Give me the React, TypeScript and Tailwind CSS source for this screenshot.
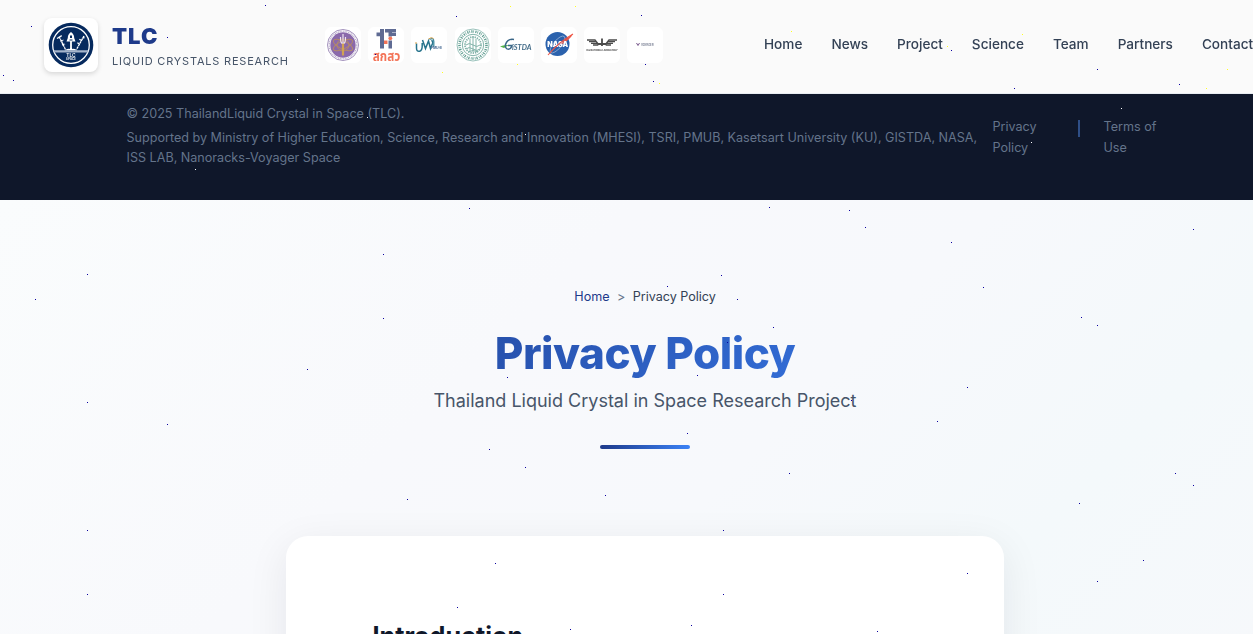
import React from "react";

type Dot = [number, number];

const blueDots: Dot[] = [
  [87, 274], [35, 299], [383, 254], [383, 318], [307, 369], [87, 402], [167, 424], [407, 499], [87, 530], [87, 594],
  [849, 210], [865, 227], [951, 242], [1193, 229], [983, 287], [1081, 317], [1097, 325], [967, 387], [937, 421],
  [851, 400], [1175, 473], [1193, 485], [1079, 503], [1143, 560], [1097, 581], [967, 573], [877, 631], [721, 275],
  [667, 286], [737, 299], [773, 327], [507, 377], [697, 375], [727, 342], [687, 433], [489, 449], [525, 467],
  [789, 473], [605, 495], [723, 530], [469, 208], [769, 207], [495, 563], [457, 607], [570, 629], [691, 625],
  [723, 594], [265, 5], [31, 26], [3, 75], [13, 80], [167, 37], [456, 16], [641, 15], [645, 64], [375, 54],
  [653, 81], [951, 50], [1097, 69], [1179, 84], [1014, 88],
];
const yellowDots: Dot[] = [
  [1022, 34], [1206, 88], [947, 46], [510, 6], [575, 6], [517, 64], [442, 72], [659, 83], [791, 31], [1227, 69],
];
const whiteDots: Dot[] = [[1121, 108], [1031, 142], [297, 99], [367, 117], [525, 134], [195, 169]];

function Stars() {
  return (
    <svg className="pointer-events-none absolute left-0 top-0 z-50" width="1253" height="634" shapeRendering="crispEdges">
      {blueDots.map(([x, y]) => <rect key={`${x}-${y}`} x={x} y={y} width="1" height="1" fill="#0a00a0" />)}
      {yellowDots.map(([x, y]) => <rect key={`${x}-${y}`} x={x} y={y} width="1" height="1" fill="#ffff20" />)}
      {whiteDots.map(([x, y]) => <rect key={`${x}-${y}`} x={x} y={y} width="1" height="1" fill="#ffffff" />)}
    </svg>
  );
}

function TlcLogo() {
  return (
    <svg width="46" height="46" viewBox="0 0 46 46">
      <circle cx="23" cy="23" r="22.3" fill="#062a5e" />
      <circle cx="23" cy="23" r="18.3" fill="#062a5e" stroke="#fff" strokeWidth="1.3" />
      <path d="M23 10c-2.700 1.800-3.200 4-3.200 6l-1.300 3.500h9l-1.300-3.500c0-2-.5-4.200-3.200-6z" fill="#fff" />
      <path d="M22 13.500h2v2.500h-2zM21.500 17.500h3v1h-3z" fill="#062a5e" />
      <path d="M23 19v9" stroke="#fff" strokeWidth="1.800" />
      <path d="M11 14.500l6.500 13M9 16.500l5-3M12.500 19.500l3-1.500M14 23l3-1M36 14l-7.500 13.500M33.500 18.500l-2.500-1.500M31.500 22l-2.500-1.500M34.500 16l2-.5" stroke="#fff" strokeWidth="1.300" fill="none" strokeDasharray="2.500 .5" />
      <path d="M16.500 28.500q3-2.500 5-1.500l1.500-1.500 1.500 1.500q2-1 5 1.500z" fill="#fff" />
      <path d="M5.500 28.300h35l-.8 2.200H6.300z" fill="#a5b4cb" />
      <text x="23" y="34.800" textAnchor="middle" fontSize="4.800" fontWeight="600" fill="#fff" fontFamily="Inter, sans-serif">TLC</text>
      <text x="23" y="38.400" textAnchor="middle" fontSize="3.200" fontWeight="600" fill="#fff" fontFamily="Inter, sans-serif">SPACE</text>
    </svg>
  );
}

function MinistryLogo() {
  return (
    <svg width="32" height="32" viewBox="0 0 32 32">
      <circle cx="16" cy="16" r="15.500" fill="#fff" stroke="#a493bd" strokeWidth="1" />
      <circle cx="16" cy="16" r="13.800" fill="none" stroke="#b9abcb" strokeWidth="1.200" strokeDasharray="1 .7" />
      <circle cx="16" cy="16" r="12.700" fill="#8a69ab" />
      <g fill="none" stroke="#b58a68" strokeWidth=".9">
        <ellipse cx="16" cy="16" rx="10.500" ry="4" transform="rotate(25 16 16)" />
        <ellipse cx="16" cy="16" rx="10.500" ry="4" transform="rotate(-25 16 16)" />
        <circle cx="16" cy="16" r="6" />
      </g>
      <path d="M16 5v10M13.500 8c0 5 .5 6 2.500 7 2-1 2.500-2 2.500-7" stroke="#eee5ef" strokeWidth="1.200" fill="none" />
      <path d="M16 14.500v12" stroke="#d1a253" strokeWidth="2.200" />
    </svg>
  );
}

function TsriLogo() {
  return (
    <svg width="32" height="36" viewBox="0 0 32 36" overflow="visible">
      <path d="M10 2h4v19.500h-4zM6.500 5.500H14v3.700H6.500zM15 2h11v3.500H15zM18.500 5H22v4.500h-3.500zM22 6h4v3h-4zM18.500 13.500H22v8h-3.500z" fill="#5f6b93" />
      <circle cx="20.300" cy="11.300" r="1.900" fill="#f37458" />
      <path d="M14 13.500h3.500V17H14z" fill="#f37458" />
      <text x="16.500" y="34" textAnchor="middle" fontSize="14" fontWeight="700" textLength="27.500" lengthAdjust="spacingAndGlyphs" fill="#f37458" fontFamily="Noto Sans, Noto Sans Thai, sans-serif">สกสว</text>
    </svg>
  );
}

function PmuLogo() {
  return (
    <svg width="32" height="32" viewBox="0 0 32 32" fill="none">
      <path d="M3.500 14.500V19q0 4 3.200 3.200Q9.200 21.500 9.200 17v-3M9.500 11l3 8.500 3-7.500 2 7.500 2-5q.8-2.500-1.200-3" stroke="#26738c" strokeWidth="1.500" />
      <path d="M16.500 10.500q4.300-2.500 4.300 2V18" stroke="#3d8ba0" strokeWidth="1.300" />
      <path d="M2 14h2M15.500 10q3-2.500 5-.5" stroke="#d9a34d" strokeWidth="1" />
      <text x="18" y="20" fontSize="3.600" fontWeight="700" fill="#53749b" fontFamily="Inter, sans-serif" textLength="11">PMU-B</text>
    </svg>
  );
}

function KuLogo() {
  return (
    <svg width="34" height="34" viewBox="0 0 34 34" fill="none" stroke="#82b3a9">
      <circle cx="17" cy="17" r="16" strokeWidth=".8" />
      <circle cx="17" cy="17" r="13.500" stroke="#5d9c8f" strokeWidth="2.600" strokeDasharray="1.200 .9 .7 1.300" />
      <circle cx="17" cy="17" r="10.700" strokeWidth="1" />
      <circle cx="17" cy="17" r="8" strokeWidth="1.800" strokeDasharray="1.300 1" />
      <path d="M17 8v16M14 11v12M20 11v12M10 17q3-3 7 0t7 0M10 21q3-3 7 0t7 0M12 24q5-3 10 0" strokeWidth="1" />
    </svg>
  );
}

function GistdaLogo() {
  return (
    <svg width="34" height="20" viewBox="0 0 34 20" overflow="visible">
      <path d="M1 11.500q5-2.500 9.500-1-3 0-5.500 2.500z" fill="#55b54b" />
      <path d="M15 4.500Q8.500 3.500 6.500 9.500c-1 5.500 5 6.500 6.500 1h-4" fill="none" stroke="#3b6788" strokeWidth="1.500" />
      <text x="13" y="14.500" fontSize="8" fontWeight="700" fontStyle="italic" fill="#416a87" fontFamily="Lato, sans-serif" textLength="19.500" lengthAdjust="spacingAndGlyphs">iSTDA</text>
    </svg>
  );
}

function NasaLogo() {
  return (
    <svg width="32" height="32" viewBox="0 0 32 32">
      <circle cx="14.500" cy="15" r="12" fill="#2b62ad" />
      <ellipse cx="14.500" cy="15.500" rx="10.500" ry="4" transform="rotate(-50 14.500 15.500)" fill="none" stroke="#a5bad9" strokeWidth=".7" />
      <path d="M16 17Q21 11 30 5 27 11 16 17z" fill="#ef5545" />
      <text x="14.700" y="17.500" textAnchor="middle" fontSize="7" fontWeight="900" fill="#fff" fontFamily="Inter, sans-serif" textLength="21" lengthAdjust="spacingAndGlyphs">NASA</text>
      <path d="M5 26Q16 13 30 5" fill="none" stroke="#ef5545" strokeWidth="1.100" />
    </svg>
  );
}

function IssLogo() {
  return (
    <svg width="34" height="20" viewBox="0 0 34 20" overflow="visible">
      <g fill="none" stroke="#4b4b4b" strokeWidth="1.300">
        <path d="M2 5h8l4 5M4 6.700h7M6 8.400h6M8 10h5M32 5h-8l-4 5M30 6.700h-7M28 8.400h-6M26 10h-5" />
        <path d="M17 3.500V11M13 9h8" strokeWidth="1.800" />
      </g>
      <text x="17" y="16" textAnchor="middle" fontSize="2.400" fontWeight="700" fill="#333" fontFamily="Inter, sans-serif" textLength="31" lengthAdjust="spacingAndGlyphs">ISS NATIONAL LABORATORY</text>
    </svg>
  );
}

function VoyagerLogo() {
  return (
    <svg width="20" height="8" viewBox="0 0 20 8" overflow="visible">
      <path d="M1.500 2l1.500 2.500L4.500 2" fill="none" stroke="#7b5c8e" strokeWidth="1" />
      <text x="6" y="5" fontSize="2.800" fontWeight="500" fill="#59617a" fontFamily="Inter, sans-serif" textLength="12.500">VOYAGER</text>
    </svg>
  );
}

const partners = [MinistryLogo, TsriLogo, PmuLogo, KuLogo, GistdaLogo, NasaLogo, IssLogo, VoyagerLogo];
const links = ["Home", "News", "Project", "Science", "Team", "Partners", "Contact"];

export default function App() {
  return (
    <div className="relative h-[634px] w-full overflow-hidden bg-[#f8fafc] font-['Inter',sans-serif]">
      <div className="flex h-full w-[1290px] flex-col">
        <header className="flex h-[94px] shrink-0 items-start border-b border-[#e9edf2] bg-[#fafafa] pl-11 pt-[18px] will-change-transform">
          <div className="flex w-[281px] shrink-0 items-center gap-[14px]">
            <div className="flex size-[54px] shrink-0 items-center justify-center rounded-lg bg-white shadow-[0_2px_5px_rgba(0,0,0,0.14)]">
              <TlcLogo />
            </div>
            <div className="whitespace-nowrap">
              <div className="pt-px text-[22px] font-black leading-[27px] tracking-[1px] text-[#1e3a8a]">TLC</div>
              <div className="mt-1 text-[11px] leading-[14px] tracking-[0.8px] text-[#475569]">LIQUID CRYSTALS RESEARCH</div>
            </div>
          </div>
          <div className="mt-[9px] flex w-[338px] shrink-0 gap-[7.2px]">
            {partners.map((Logo, i) => (
              <div key={i} className="flex size-9 shrink-0 items-center justify-center rounded-md bg-white"><Logo /></div>
            ))}
          </div>
          <nav className="ml-[101px] mt-[15px] flex gap-[29px] whitespace-nowrap text-[13.6px] font-medium leading-[22px] text-[#334155]">
            {links.map((l) => <a key={l}>{l}</a>)}
          </nav>
        </header>
        <footer className="flex h-[106px] shrink-0 bg-[#0f172a] pl-[126.5px] text-[12.6px] text-[#64748b]">
          <div className="w-[866px] shrink-0 pt-[10px]">
            <p className="leading-5">© 2025 ThailandLiquid Crystal in Space (TLC).</p>
            <p className="mt-1 w-[860px] leading-5">Supported by Ministry of Higher Education, Science, Research and Innovation (MHESI), TSRI, PMUB, Kasetsart University (KU), GISTDA, NASA, ISS LAB, Nanoracks-Voyager Space</p>
          </div>
          <div className="flex pt-[22px] leading-[21px]">
            <a className="w-[85.5px]">Privacy<br />Policy</a>
            <span className="w-[25.5px]"><span className="mt-[4px] block h-[17px] w-[2px] bg-[#2f4f87]" /></span>
            <a className="w-[60px]">Terms of<br />Use</a>
          </div>
        </footer>
        <main className="flex flex-1 flex-col items-center bg-[linear-gradient(135deg,#fafcfd_0%,#f8f9fc_35%,#f7f9fc_55%,#f4f9fb_75%,#f7f8fb_100%)]">
          <div className="mt-[86px] flex gap-[7.5px] text-[12.6px] leading-[21px] tracking-[-0.03px] text-[#334155]">
            <a className="text-[#1e3a8a]">Home</a><span className="text-[#64748b]">&gt;</span><span>Privacy Policy</span>
          </div>
          <h1 className="mt-[19px] w-[860px] bg-[linear-gradient(135deg,#1e3a8a,#3b82f6)] bg-clip-text text-center text-[44px] font-extrabold leading-[54px] tracking-[-0.5px] text-transparent">Privacy Policy</h1>
          <p className="mt-[7px] text-[18px] leading-[28px] text-[#475569]">Thailand Liquid Crystal in Space Research Project</p>
          <div className="mt-[30px] h-1 w-[90px] shrink-0 rounded-sm bg-[linear-gradient(90deg,#1e3a8a,#3b82f6)]" />
          <section className="mt-[87px] h-[200px] w-[718px] shrink-0 rounded-[22px] bg-white pl-[86.5px] pt-[82px] shadow-[0_10px_40px_rgba(15,23,42,0.08)]">
            <h2 className="text-[25.2px] font-bold leading-9 text-[#0f172a]">Introduction</h2>
          </section>
        </main>
      </div>
      <Stars />
    </div>
  );
}
